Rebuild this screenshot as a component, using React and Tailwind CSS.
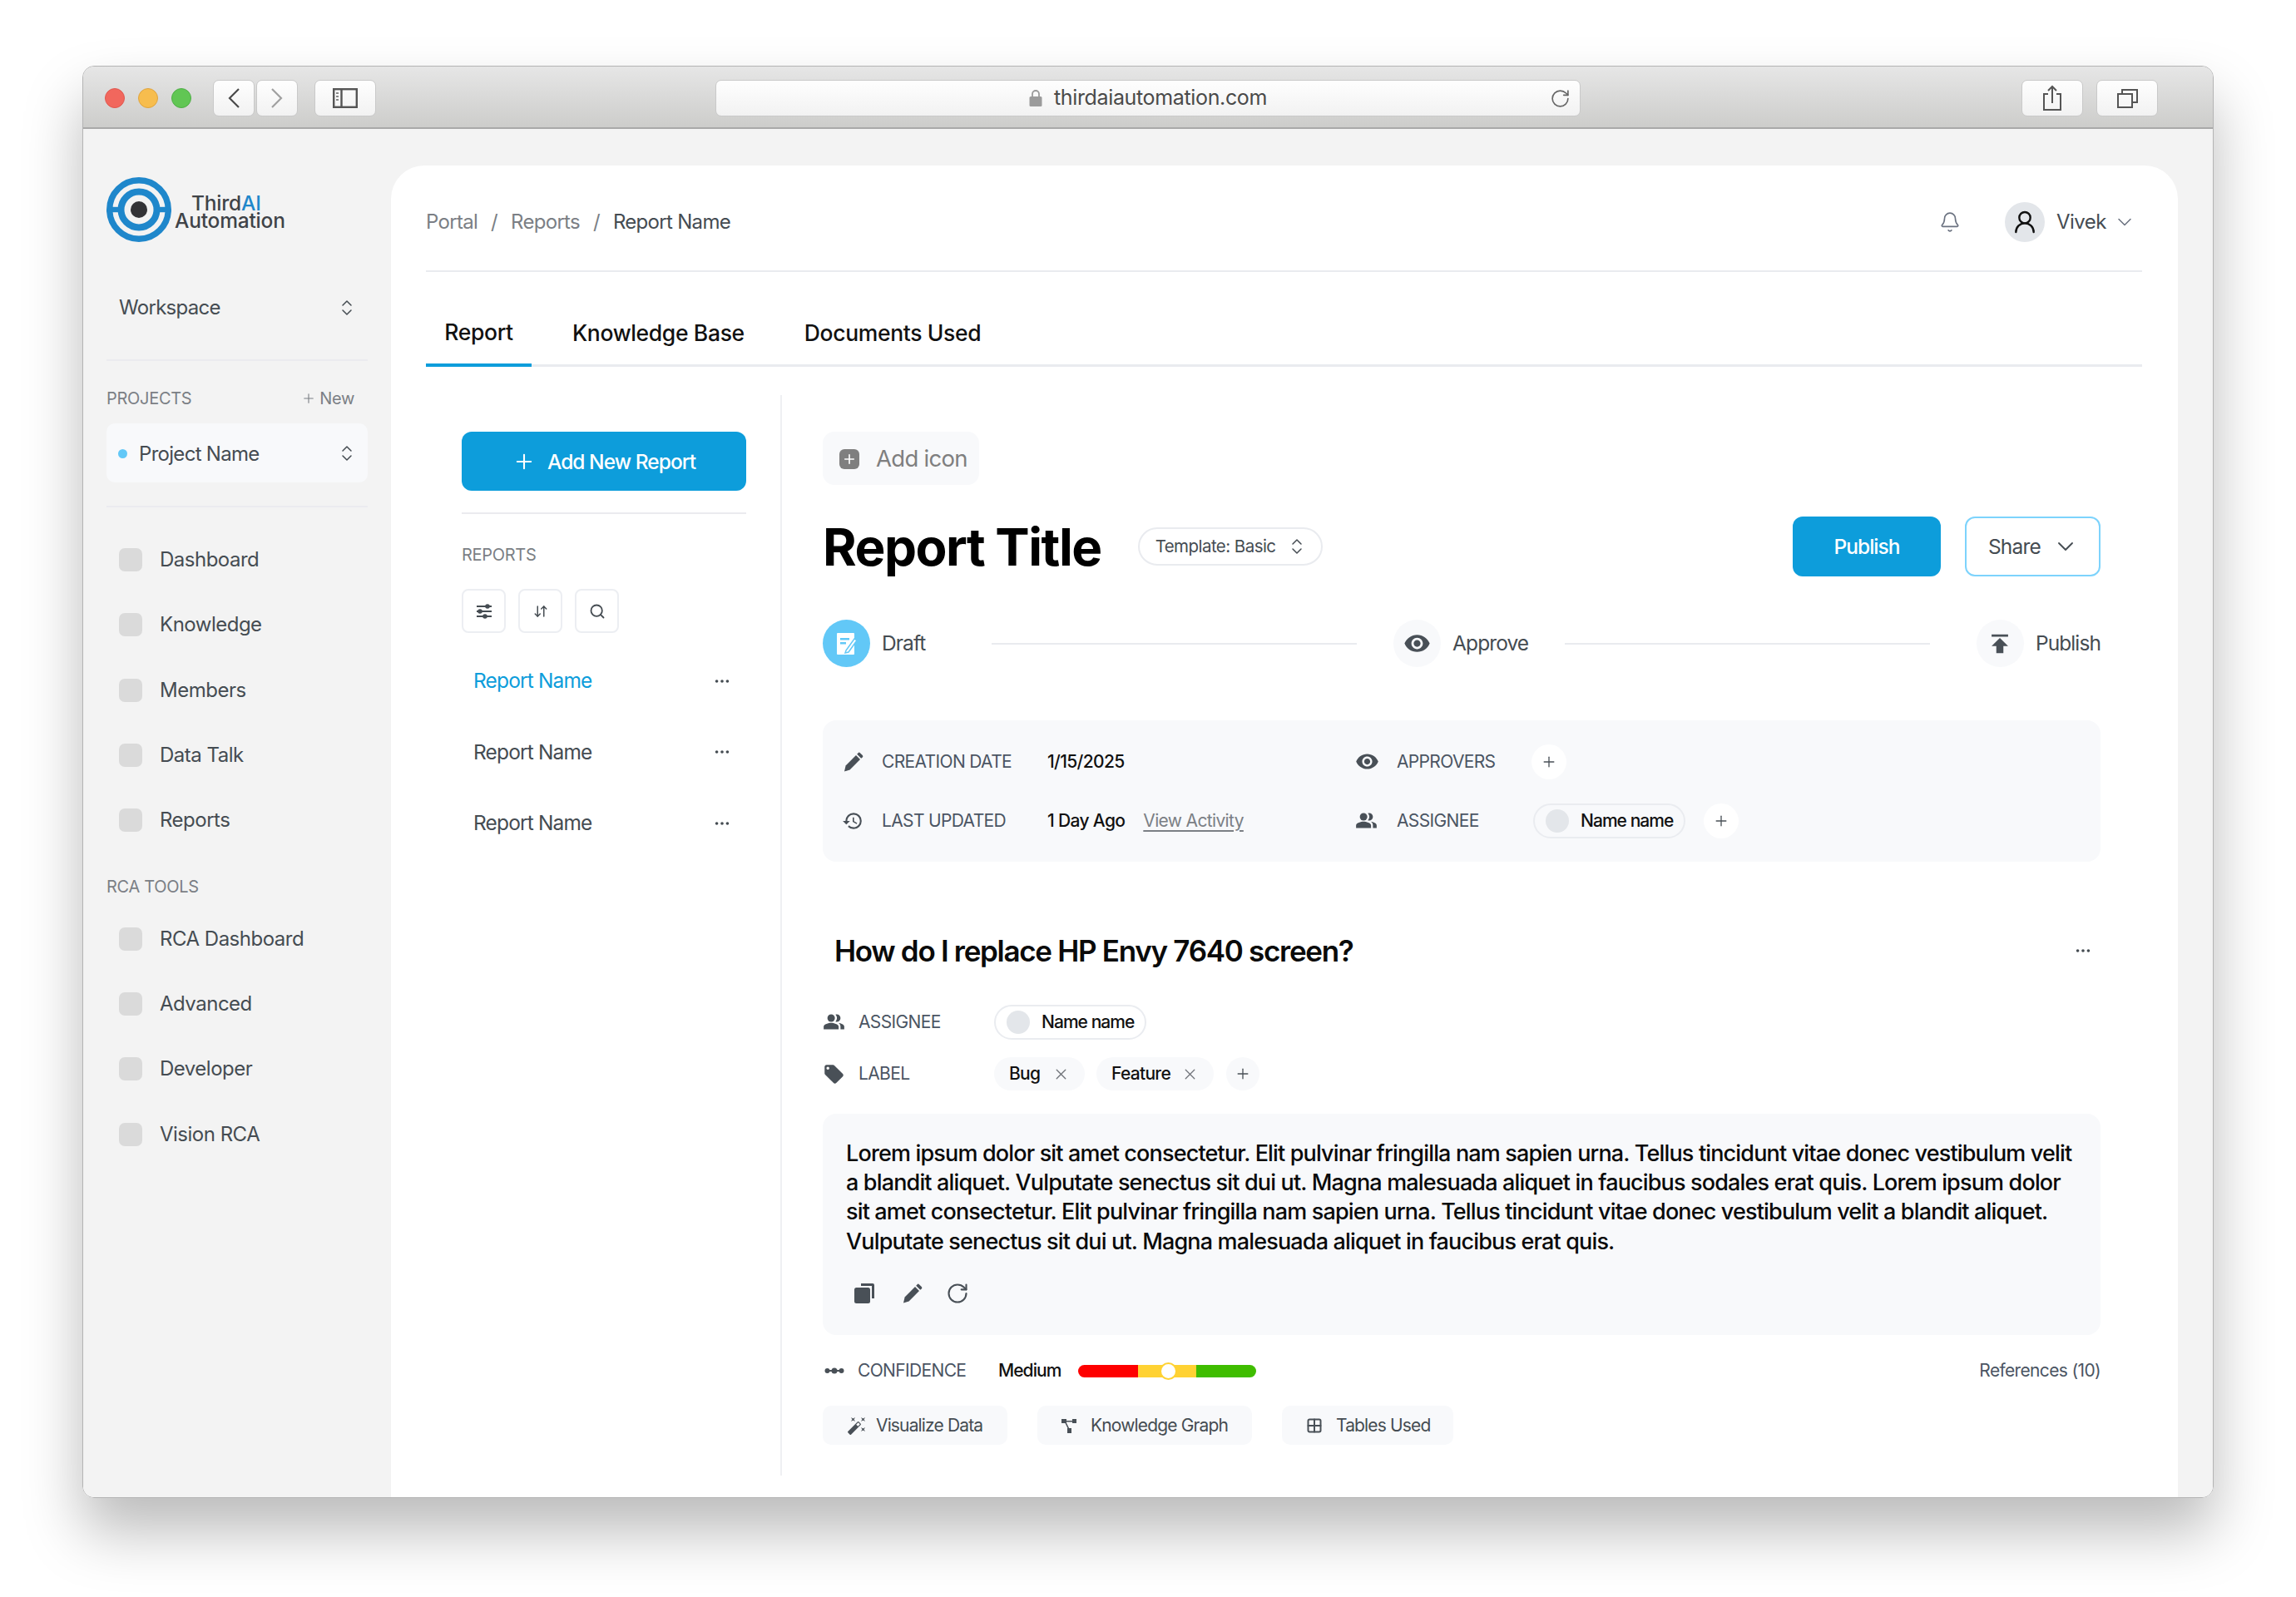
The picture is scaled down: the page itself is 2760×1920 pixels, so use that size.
import React from 'react';
import { ChevronsUpDown, ChevronDown, Plus, X, ArrowDownUp, Search, Bell, UserRound, Ellipsis, RotateCw, Grid2x2 } from 'lucide-react';
import { MdHistory, MdVisibility, MdPeopleAlt, MdLocalOffer, MdPublish, MdAutoFixHigh } from 'react-icons/md';

const Logo = () => (
  <svg width="78" height="78" viewBox="0 0 78 78" className="shrink-0">
    <circle cx="39" cy="39" r="35.3" fill="none" stroke="#1f87cb" strokeWidth="7.4" />
    <circle cx="39" cy="39" r="21.5" fill="none" stroke="#1f87cb" strokeWidth="8" />
    <rect x="6" y="35.8" width="12" height="6.4" fill="#1f87cb" />
    <rect x="60" y="35.8" width="12" height="6.4" fill="#1f87cb" />
    <circle cx="39" cy="39" r="10" fill="#333336" />
  </svg>
);

const Eye = ({ size = 24 }) => <MdVisibility size={size} color="#495057" />;

const Pencil = ({ size = 24 }) => (
  <svg width={size} height={size} viewBox="0 0 24 24" fill="#495057">
    <path d="M1 23.5 L2.6 16.4 L15 4 L20 9 L7.6 21.4 Z" />
    <path d="M16.2 2.8 L17.6 1.2 a1.6 1.6 0 0 1 2.3 0 L22.8 4.1 a1.6 1.6 0 0 1 0 2.3 L21.2 7.8 Z" />
  </svg>
);

const DraftIcon = () => (
  <svg width="26" height="30" viewBox="0 0 26 30">
    <rect x="1" y="2" width="21" height="26" fill="#fff" rx="1" />
    <rect x="5" y="8" width="11" height="2.5" fill="#62c8f7" />
    <rect x="5" y="13" width="7" height="2.5" fill="#62c8f7" />
    <path d="M12 23 L22 9 L25 11 L15 25 L11 26 Z" fill="#fff" stroke="#62c8f7" strokeWidth="1.5" />
  </svg>
);

const CopyIcon = () => (
  <svg width="24" height="24" viewBox="0 0 24 24" fill="#495057">
    <path d="M8 0h14a2 2 0 0 1 2 2v16h-3V3H8z" />
    <rect x="0" y="5" width="19" height="19" rx="2.5" />
  </svg>
);

const ConfidenceIcon = () => (
  <svg width="24" height="10" viewBox="0 0 24 10" fill="#495057">
    <circle cx="3.5" cy="5" r="3" /><circle cx="12" cy="5" r="3.5" /><circle cx="20.5" cy="5" r="3" />
    <rect x="3" y="4" width="18" height="2" />
  </svg>
);

const GraphIcon = () => (
  <svg width="18" height="18" viewBox="0 0 18 18" fill="#495057">
    <rect x="0" y="1" width="6" height="5" /><rect x="13" y="1" width="5" height="5" /><rect x="7" y="12" width="5" height="6" />
    <path d="M3 3h12v1.5H3zM3 3l1.3-.7 5.4 11-1.3.7z" />
  </svg>
);

const SlidersIcon = () => (
  <svg width="20" height="18" viewBox="0 0 20 18" fill="#454c52">
    <rect x="1" y="2" width="18" height="2" /><rect x="1" y="8" width="18" height="2" /><rect x="1" y="14" width="18" height="2" />
    <circle cx="14" cy="3" r="2.8" /><circle cx="5" cy="9" r="2.8" /><circle cx="11" cy="15" r="2.8" />
  </svg>
);

const AddSquare = () => (
  <span className="flex h-[24px] w-[24px] items-center justify-center rounded-[6px] bg-[#7f7f7f]">
    <Plus size={18} color="#fff" strokeWidth={2.2} />
  </span>
);

const UpDown = ({ size = 24 }) => <ChevronsUpDown size={size} color="#454c52" strokeWidth={1.5} />;

const ToolbarButton = ({ children, className }) => (
  <div className={`flex h-[44px] items-center justify-center rounded-[7px] border border-[#c9c9c9] bg-gradient-to-b from-[#fefefe] to-[#f2f2f2] ${className}`}>
    {children}
  </div>
);

const NavItem = ({ label }) => (
  <div className="flex h-[78.3px] items-center gap-[21px] pl-[15px]">
    <span className="h-[28px] w-[28px] rounded-[7px] bg-[#dadada]" />
    <span className="text-[24px] tracking-[-0.5px] text-[#454c52]">{label}</span>
  </div>
);

const Avatar = () => <span className="h-[28px] w-[28px] rounded-full bg-[#e3e6ea]" />;

const NamePill = ({ className }) => (
  <div className={`flex h-[42px] w-[183px] items-center gap-[14px] rounded-full border-2 border-[#eaecf0] pl-[13px] text-[21px] font-medium tracking-[-0.95px] text-[#111] ${className}`}>
    <Avatar />
    <span>Name name</span>
  </div>
);

const Tag = ({ label, w }) => (
  <div className={`flex h-[40px] items-center justify-between rounded-full bg-[#f8f9fb] pl-[18px] pr-[18px] text-[21px] font-medium tracking-[-0.7px] text-[#111] ${w}`}>
    <span>{label}</span>
    <X size={21} color="#6f7378" strokeWidth={1.5} />
  </div>
);

const Step = ({ icon, label, active }) => (
  <div className="flex items-center gap-[14px]">
    <span className={`flex h-[57px] w-[57px] items-center justify-center rounded-full ${active ? 'bg-[#62c8f7]' : 'bg-[#f8f9fb]'}`}>{icon}</span>
    <span className="text-[24.5px] tracking-[-0.9px] text-[#454c52]">{label}</span>
  </div>
);

const ReportRow = ({ active, h }) => (
  <div className={`flex items-center justify-between pl-[14px] pr-[18px] ${h}`}>
    <span className={`text-[24.5px] tracking-[-0.85px] ${active ? 'text-[#0d9ddb]' : 'text-[#454c52]'}`}>Report Name</span>
    <Ellipsis size={22} color="#454c52" />
  </div>
);

const Chip = ({ icon, label, w, gap }) => (
  <div className={`flex h-[47px] items-center rounded-[10px] bg-[#f8f9fb] pl-[29px] text-[21px] tracking-[-0.85px] text-[#454c52] ${w} ${gap}`}>
    {icon}
    <span>{label}</span>
  </div>
);

const CircleAdd = () => (
  <span className="flex h-[42px] w-[42px] items-center justify-center rounded-full bg-white">
    <Plus size={20} color="#495057" strokeWidth={1.6} />
  </span>
);

export default function App() {
  return (
    <div className="h-[1920px] w-[2760px] bg-white pl-[99px] pt-[79px] font-['Inter',sans-serif]">
      <div className="flex h-[1722px] w-[2562px] flex-col overflow-hidden rounded-[14px] border border-[#b4b4b4] shadow-[0_40px_70px_rgba(0,0,0,0.27)]">
        {/* title bar */}
        <div className="flex h-[75px] shrink-0 items-center border-b-2 border-[#a9a9a9] bg-gradient-to-b from-[#e6e6e6] to-[#cdcdcb] pl-[26px] pr-[66px] pt-[2px]">
          <div className="flex gap-[16px]">
            <span className="h-[24px] w-[24px] rounded-full border border-[#e0574f] bg-[#f1675d]" />
            <span className="h-[24px] w-[24px] rounded-full border border-[#dfa43f] bg-[#f7bd4e]" />
            <span className="h-[24px] w-[24px] rounded-full border border-[#4fae47] bg-[#61c654]" />
          </div>
          <div className="ml-[26px] flex gap-[2px]">
            <ToolbarButton className="w-[50px]">
              <svg width="14" height="24" viewBox="0 0 14 24" fill="none" stroke="#4a4a4a" strokeWidth="2.2"><path d="M13 1 L2 12 L13 23" /></svg>
            </ToolbarButton>
            <ToolbarButton className="w-[50px]">
              <svg width="14" height="24" viewBox="0 0 14 24" fill="none" stroke="#a0a0a0" strokeWidth="2.2"><path d="M1 1 L12 12 L1 23" /></svg>
            </ToolbarButton>
          </div>
          <ToolbarButton className="ml-[20px] w-[74px]">
            <svg width="30" height="24" viewBox="0 0 30 24" fill="none" stroke="#555" strokeWidth="2.4">
              <rect x="1.2" y="1.2" width="27.6" height="21.6" />
              <path d="M10.5 1v22" />
              <path d="M4 6h3M4 10h3M4 14h3" strokeWidth="2" stroke="#888" />
            </svg>
          </ToolbarButton>
          <ToolbarButton className="relative ml-[408px] w-[1040px] gap-[14px]">
            <svg width="16" height="21" viewBox="0 0 16 21" fill="none">
              <path d="M4 9V6a4 4 0 0 1 8 0v3" stroke="#9b9b9b" strokeWidth="1.8" />
              <rect x="0.5" y="9" width="15" height="12" rx="1.5" fill="#9b9b9b" />
            </svg>
            <span className="text-[25px] tracking-[-0.35px] text-[#4a4a4a]">thirdaiautomation.com</span>
            <RotateCw size={25} color="#666" strokeWidth={1.6} className="absolute right-[11px] top-[9px]" />
          </ToolbarButton>
          <ToolbarButton className="ml-auto w-[74px]">
            <svg width="24" height="32" viewBox="0 0 24 32" fill="none" stroke="#555" strokeWidth="2">
              <path d="M7 11H2v19h20V11h-5M12 22V2M7 7l5-5 5 5" />
            </svg>
          </ToolbarButton>
          <ToolbarButton className="ml-[16px] w-[74px]">
            <svg width="26" height="24" viewBox="0 0 26 24" fill="none" stroke="#555" strokeWidth="2">
              <rect x="2" y="7" width="17" height="16" /><path d="M7 7V2h18v15h-6" />
            </svg>
          </ToolbarButton>
        </div>

        {/* body */}
        <div className="flex min-h-0 flex-1 bg-[#f3f3f3] pt-[44px]">
          {/* sidebar */}
          <aside className="w-[370px] shrink-0 pl-[28px] pr-[28px] pt-[14px]">
            <div className="flex h-[78px] items-center">
              <Logo />
              <div className="ml-[4px] pt-[6px] text-[24.5px] font-medium tracking-[-0.2px] text-[#3f4348]">
                <div className="h-[21px] pl-[20px] leading-[21px]">Third<span className="text-[#1f87cb]">AI</span></div>
                <div className="h-[21px] leading-[21px]">Automation</div>
              </div>
            </div>
            <div className="flex h-[143px] items-center justify-between border-b-2 border-[#ebebef] pl-[15px] pr-[13px] pt-[17px]">
              <span className="text-[24px] tracking-[-0.7px] text-[#454c52]">Workspace</span>
              <UpDown />
            </div>
            <div className="flex h-[75px] items-center justify-between pr-[16px] pt-[15px] text-[20px] tracking-[-0.3px] text-[#7b7f85]">
              <span>PROJECTS</span>
              <span className="flex items-center gap-[4px]"><Plus size={18} strokeWidth={1.5} />New</span>
            </div>
            <div className="flex h-[71px] items-center justify-between rounded-[10px] bg-[#f8f9fb] pl-[14px] pr-[13px]">
              <span className="flex items-center gap-[14px] pt-[2px]">
                <span className="h-[11px] w-[11px] rounded-full bg-[#62c8f7]" />
                <span className="text-[24px] tracking-[-0.7px] text-[#454c52]">Project Name</span>
              </span>
              <UpDown />
            </div>
            <div className="mt-[28px] border-t-2 border-[#ebebef] pt-[24px]">
              {['Dashboard', 'Knowledge', 'Members', 'Data Talk', 'Reports'].map((l) => <NavItem key={l} label={l} />)}
            </div>
            <div className="mt-[20px] flex h-[42px] items-center text-[20px] tracking-[-0.3px] text-[#7b7f85]">RCA TOOLS</div>
            <div className="pt-[2px]">
              {['RCA Dashboard', 'Advanced', 'Developer', 'Vision RCA'].map((l) => <NavItem key={l} label={l} />)}
            </div>
          </aside>

          {/* main */}
          <main className="mr-[42px] flex min-w-0 flex-1 flex-col rounded-t-[40px] bg-white pl-[42px] pr-[43px]">
            <header className="flex h-[128px] shrink-0 items-center justify-between border-b-2 border-[#e9ebef] pt-[9px]">
              <div className="flex items-center gap-[16px] text-[24px] tracking-[-0.7px] text-[#7b7f85]">
                <span>Portal</span><span>/</span><span>Reports</span><span>/</span><span className="text-[#454c52]">Report Name</span>
              </div>
              <div className="flex items-center pr-[7px]">
                <Bell size={26} color="#6b7280" strokeWidth={1.5} />
                <span className="ml-[53px] flex h-[48px] w-[48px] items-center justify-center rounded-full bg-[#e3e6ea]">
                  <UserRound size={32} color="#111" strokeWidth={1.8} />
                </span>
                <span className="ml-[14px] text-[24px] tracking-[-0.5px] text-[#454c52]">Vivek</span>
                <ChevronDown size={28} color="#6b7280" strokeWidth={1.3} className="ml-[8px]" />
              </div>
            </header>

            <nav className="flex h-[114px] shrink-0 items-end gap-[4px] border-b-[3px] border-[#e9ebef] text-[26.5px] font-medium tracking-[-0.35px] text-[#111]">
              <div className="-mb-[3px] flex h-[78px] w-[127px] items-center justify-center border-b-[4px] border-[#0d9ddb]">Report</div>
              <div className="flex h-[75px] items-center pl-[45px] pr-[68px]">Knowledge Base</div>
              <div className="flex h-[75px] items-center">Documents Used</div>
            </nav>

            <div className="mt-[34px] flex min-h-0 flex-1 pb-[26px]">
              {/* reports column */}
              <section className="w-[426px] shrink-0 pl-[43px] pr-[41px] pt-[44px]">
                <button className="flex h-[71px] w-full items-center justify-center gap-[14px] rounded-[12px] bg-[#0d9ddb] pt-[1px] text-[24.5px] font-medium tracking-[-0.95px] text-white">
                  <Plus size={28} strokeWidth={1.8} />Add New Report
                </button>
                <div className="mt-[26px] border-t-2 border-[#ebebef] pt-[36px] text-[20px] leading-[26px] tracking-[-0.3px] text-[#7b7f85]">REPORTS</div>
                <div className="mt-[28px] flex gap-[15px]">
                  <span className="flex h-[53px] w-[53px] items-center justify-center rounded-[8px] border-2 border-[#eceef2]"><SlidersIcon /></span>
                  <span className="flex h-[53px] w-[53px] items-center justify-center rounded-[8px] border-2 border-[#eceef2]"><ArrowDownUp size={18} color="#454c52" strokeWidth={2} /></span>
                  <span className="flex h-[53px] w-[53px] items-center justify-center rounded-[8px] border-2 border-[#eceef2]"><Search size={20} color="#454c52" strokeWidth={2.2} /></span>
                </div>
                <div className="mt-[15px]">
                  <ReportRow active h="h-[85px]" />
                  <ReportRow h="h-[86px]" />
                  <ReportRow h="h-[85px]" />
                </div>
              </section>

              {/* report detail */}
              <section className="min-w-0 flex-1 border-l-2 border-[#eff0f3] pl-[49px] pr-[50px] pt-[44px]">
                <div className="flex h-[64px] w-[188px] items-center gap-[20px] rounded-[14px] bg-[#f8f9fb] pl-[20px] pt-[1px] text-[27.5px] tracking-[-0.7px] text-[#7f7f7f]">
                  <AddSquare />Add icon
                </div>
                <div className="mt-[38px] flex h-[72px] items-center">
                  <h1 className="text-[62px] font-bold tracking-[-1.5px] text-black">Report Title</h1>
                  <div className="ml-[44px] flex h-[46px] w-[222px] items-center justify-between rounded-full border-2 border-[#e9ebef] pl-[19px] pr-[17px] text-[20.5px] tracking-[-0.55px] text-[#454c52]">
                    Template: Basic
                    <UpDown />
                  </div>
                  <button className="ml-auto h-[72px] w-[178px] rounded-[12px] bg-[#0d9ddb] text-[24.5px] font-medium tracking-[-0.95px] text-white">Publish</button>
                  <button className="ml-[29px] flex h-[72px] w-[163px] items-center gap-[14px] rounded-[12px] border-2 border-[#7dd3fc] pl-[26px] text-[24.5px] tracking-[-0.85px] text-[#454c52]">
                    Share<ChevronDown size={32} strokeWidth={1.4} />
                  </button>
                </div>

                <div className="mt-[52px] flex items-center">
                  <Step active label="Draft" icon={<DraftIcon />} />
                  <span className="ml-[80px] mr-[44px] h-[2px] flex-1 bg-[#e9ebef]" />
                  <Step label="Approve" icon={<Eye size={33} />} />
                  <span className="ml-[44px] mr-[56px] h-[2px] flex-1 bg-[#e9ebef]" />
                  <Step label="Publish" icon={<MdPublish size={34} color="#495057" />} />
                </div>

                <div className="mt-[64px] grid h-[170px] grid-cols-[615px_1fr] grid-rows-2 items-center rounded-[16px] bg-[#f8f9fb] px-[25px] py-[14px]">
                  <div className="flex items-center text-[21px] tracking-[-0.65px] text-[#4b5563]">
                    <Pencil />
                    <span className="ml-[22px] w-[199px]">CREATION DATE</span>
                    <span className="font-medium text-[#111]">1/15/2025</span>
                  </div>
                  <div className="flex items-center text-[21px] tracking-[-0.65px] text-[#4b5563]">
                    <Eye size={29} />
                    <span className="ml-[21px] w-[162px]">APPROVERS</span>
                    <CircleAdd />
                  </div>
                  <div className="flex items-center text-[21px] tracking-[-0.65px] text-[#4b5563]">
                    <MdHistory size={26} color="#495057" className="-ml-[2px]" />
                    <span className="ml-[22px] w-[199px]">LAST UPDATED</span>
                    <span className="font-medium text-[#111]">1 Day Ago</span>
                    <span className="ml-[22px] text-[#7b7f85] underline underline-offset-4">View Activity</span>
                  </div>
                  <div className="flex items-center text-[21px] tracking-[-0.65px] text-[#4b5563]">
                    <MdPeopleAlt size={27} color="#495057" />
                    <span className="ml-[23px] w-[164px]">ASSIGNEE</span>
                    <NamePill />
                    <span className="ml-[22px]"><CircleAdd /></span>
                  </div>
                </div>

                <div className="mt-[81px] flex items-center justify-between pl-[14px] pr-[10px]">
                  <h2 className="text-[35px] font-semibold leading-[52px] tracking-[-1.3px] text-[#0a0a0a]">How do I replace HP Envy 7640 screen?</h2>
                  <Ellipsis size={22} color="#454c52" />
                </div>
                <div className="mt-[38px] flex h-[42px] items-center pt-[1px] text-[21px] tracking-[-0.65px] text-[#4b5563]">
                  <MdPeopleAlt size={27} color="#495057" />
                  <span className="ml-[16px] w-[163px]">ASSIGNEE</span>
                  <NamePill />
                </div>
                <div className="mt-[22px] flex h-[40px] items-center text-[21px] tracking-[-0.65px] text-[#4b5563]">
                  <MdLocalOffer size={27} color="#495057" />
                  <span className="ml-[16px] w-[163px]">LABEL</span>
                  <Tag label="Bug" w="w-[109px]" />
                  <div className="ml-[14px]"><Tag label="Feature" w="w-[141px]" /></div>
                  <span className="ml-[15px] flex h-[40px] w-[40px] items-center justify-center rounded-full bg-[#f8f9fb]"><Plus size={20} color="#495057" strokeWidth={1.6} /></span>
                </div>

                <div className="mt-[28px] h-[266px] rounded-[16px] bg-[#f8f9fb] px-[28px] pt-[30px]">
                  <p className="text-[27px] font-medium leading-[35.2px] tracking-[-0.84px] text-[#0a0a0a]">
                    Lorem ipsum dolor sit amet consectetur. Elit pulvinar fringilla nam sapien urna. Tellus tincidunt vitae donec vestibulum velit a blandit aliquet. Vulputate senectus sit dui ut. Magna malesuada aliquet in faucibus sodales erat quis. Lorem ipsum dolor sit amet consectetur. Elit pulvinar fringilla nam sapien urna. Tellus tincidunt vitae donec vestibulum velit a blandit aliquet. Vulputate senectus sit dui ut. Magna malesuada aliquet in faucibus erat quis.
                  </p>
                  <div className="mt-[31px] flex items-center pl-[10px]">
                    <CopyIcon />
                    <span className="ml-[34px]"><Pencil /></span>
                    <RotateCw size={28} color="#495057" strokeWidth={1.8} className="ml-[28px]" />
                  </div>
                </div>

                <div className="mt-[28px] flex h-[30px] items-center text-[21px] tracking-[-0.65px] text-[#4b5563]">
                  <span className="ml-[2px]"><ConfidenceIcon /></span>
                  <span className="ml-[16px] w-[169px]">CONFIDENCE</span>
                  <span className="w-[96px] font-medium tracking-[-0.95px] text-[#111]">Medium</span>
                  <div className="relative flex h-[15px] w-[214px]">
                    <span className="w-[72px] rounded-l-full bg-[#fe0000]" />
                    <span className="w-[70px] bg-[#ffd233]" />
                    <span className="w-[72px] rounded-r-full bg-[#3fbd00]" />
                    <span className="absolute left-[98px] top-[-3px] h-[21px] w-[21px] rounded-full border-2 border-[#ffd233] bg-white" />
                  </div>
                  <span className="ml-auto text-[#4b5563]">References (10)</span>
                </div>

                <div className="mt-[27px] flex gap-[36px]">
                  <Chip w="w-[222px]" gap="gap-[11px]" label="Visualize Data" icon={<MdAutoFixHigh size={24} color="#495057" />} />
                  <Chip w="w-[258px]" gap="gap-[17px]" label="Knowledge Graph" icon={<GraphIcon />} />
                  <Chip w="w-[206px]" gap="gap-[16px]" label="Tables Used" icon={<Grid2x2 size={20} color="#495057" strokeWidth={2.4} />} />
                </div>
              </section>
            </div>
          </main>
        </div>
      </div>
    </div>
  );
}
